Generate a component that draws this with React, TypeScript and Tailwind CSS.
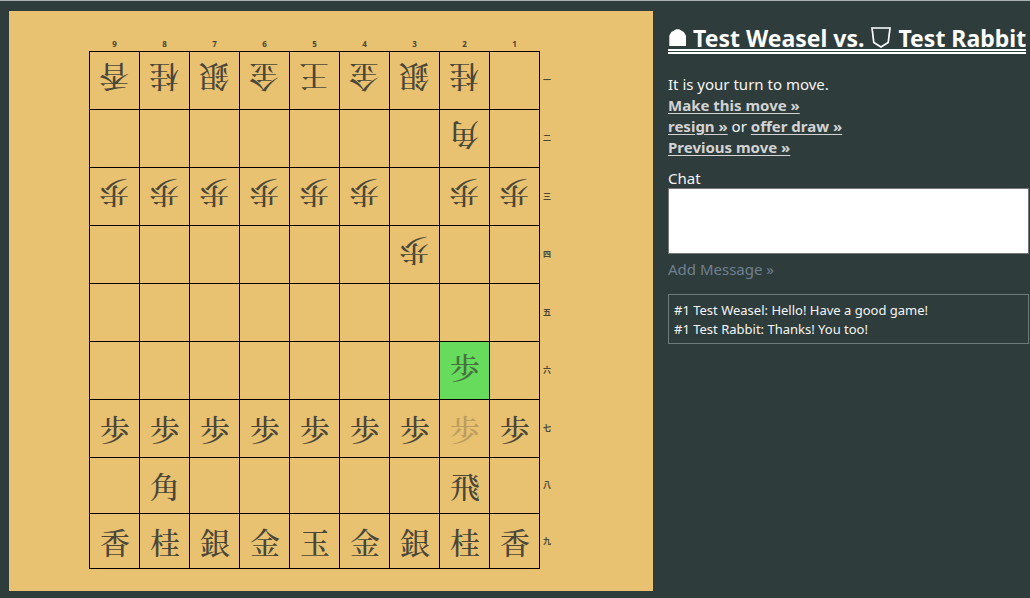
const FILES = ["9", "8", "7", "6", "5", "4", "3", "2", "1"];
const RANKS = ["一", "二", "三", "四", "五", "六", "七", "八", "九"];

// First letter: "g" gote (rotated), "s" sente, "t" move target, "f" vacated square; "." is empty.
const BOARD: string[][] = [
  ["g香", "g桂", "g銀", "g金", "g王", "g金", "g銀", "g桂", "."],
  [".", ".", ".", ".", ".", ".", ".", "g角", "."],
  ["g歩", "g歩", "g歩", "g歩", "g歩", "g歩", ".", "g歩", "g歩"],
  [".", ".", ".", ".", ".", ".", "g歩", ".", "."],
  [".", ".", ".", ".", ".", ".", ".", ".", "."],
  [".", ".", ".", ".", ".", ".", ".", "t歩", "."],
  ["s歩", "s歩", "s歩", "s歩", "s歩", "s歩", "s歩", "f歩", "s歩"],
  [".", "s角", ".", ".", ".", ".", ".", "s飛", "."],
  ["s香", "s桂", "s銀", "s金", "s玉", "s金", "s銀", "s桂", "s香"],
];

const PIECE_STYLE: Record<string, string> = {
  g: "rotate-180 pt-0.5 pl-px text-[#4a4639]",
  s: "pl-px text-[#4a4639]",
  t: "pb-2 pl-px text-[#46713f]",
  f: "pl-px text-[#bd9d5d]",
};

function Square({ value }: { value: string }) {
  const side = value[0];
  return (
    <td className={`border border-black p-0 ${side === "t" ? "bg-[#66db5c]" : ""}`}>
      {side !== "." && (
        <span className={`flex items-center justify-center text-[30px] leading-8 font-medium ${PIECE_STYLE[side]}`}>
          {value.slice(1)}
        </span>
      )}
    </td>
  );
}

function Board() {
  return (
    <section aria-label="Board" className="bg-[#e8c271] pt-[27px] pb-[22px] pl-20">
      <table className="table-fixed border-collapse font-['Noto_Serif_CJK_JP','Noto_Sans_CJK_JP',serif]">
        <colgroup>
          {FILES.map((f) => (
            <col key={f} className="w-[50px]" />
          ))}
          <col className="w-4" />
        </colgroup>
        <thead>
          <tr className="h-[13px]">
            {FILES.map((f) => (
              <th
                key={f}
                scope="col"
                className="p-0 font-['Noto_Sans',sans-serif] text-[8px] leading-3 font-bold text-[#4a4639]"
              >
                {f}
              </th>
            ))}
            <td />
          </tr>
        </thead>
        <tbody>
          {BOARD.map((row, r) => (
            <tr key={RANKS[r]} className={r === 8 ? "h-[55px]" : r === 7 ? "h-14" : "h-[58px]"}>
              {row.map((v, c) => (
                <Square key={FILES[c]} value={v} />
              ))}
              <th
                scope="row"
                className="p-0 pl-[3px] text-left font-['Noto_Sans_CJK_JP',sans-serif] text-[8px] leading-3 font-bold text-[#4a4639]"
              >
                {RANKS[r]}
              </th>
            </tr>
          ))}
        </tbody>
      </table>
    </section>
  );
}

function ActionLink({ children }: { children: string }) {
  return (
    <a href="#" className="font-bold text-[#d3d3d3] underline underline-offset-2">
      {children}
    </a>
  );
}

export default function App() {
  return (
    <main className="grid min-h-screen grid-cols-[644fr_361fr] items-start gap-x-[15px] border-t border-[#a9b1b1] bg-[#2e3c3c] pt-[10px] pr-px pb-[7px] pl-[9px] font-['Noto_Sans',sans-serif] text-[15px] leading-[21px] text-[#f5f5f5]">
      <Board />
      <section className="min-w-0 pt-4">
        <h1 className="flex w-fit items-center border-b-5 border-double border-white text-[23px] leading-[22px] font-bold whitespace-nowrap text-white">
          <svg viewBox="0 0 18 19" className="mr-1.5 ml-px h-[19px] w-[18px] fill-white" aria-hidden="true">
            <path d="M0.3 17 V6.8 L2.3 3 L7.3 0.2 H10 L14.8 3 L17 6.8 V17 Z" />
          </svg>
          <span>Test Weasel vs.</span>
          <svg
            viewBox="0 0 20 22"
            className="mx-[7px] h-[22px] w-5 fill-none stroke-white stroke-[1.7]"
            aria-hidden="true"
          >
            <path d="M1 1 H19 L17.2 15.5 L10 20 L2.8 15.5 Z" />
          </svg>
          <span>Test Rabbit</span>
        </h1>
        <div className="mt-5">
          <p>It is your turn to move.</p>
          <p>
            <ActionLink>Make this move »</ActionLink>
          </p>
          <p>
            <ActionLink>resign »</ActionLink> or <ActionLink>offer draw »</ActionLink>
          </p>
          <p>
            <ActionLink>Previous move »</ActionLink>
          </p>
        </div>
        <form className="mt-[10px]">
          <label htmlFor="chat" className="block leading-5">
            Chat
          </label>
          <textarea
            id="chat"
            className="block h-[66px] w-full resize-none border border-[#767676] bg-white p-1 text-black outline-none"
          />
          <button type="button" className="mt-[5px] block text-[#708090]">
            Add Message »
          </button>
        </form>
        <div className="mt-[14px] border border-[#6f7b7b] px-[5px] pt-1.5 pb-1 text-[13px] leading-[19px]">
          <p>#1 Test Weasel: Hello! Have a good game!</p>
          <p>#1 Test Rabbit: Thanks! You too!</p>
        </div>
      </section>
    </main>
  );
}
